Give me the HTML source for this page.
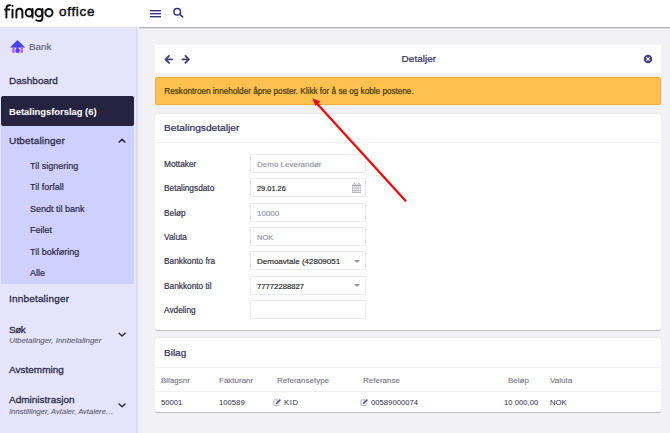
<!DOCTYPE html>
<html><head><meta charset="utf-8">
<style>
*{margin:0;padding:0;box-sizing:border-box}
html,body{width:670px;height:433px;overflow:hidden;background:#f1f1f6;font-family:"Liberation Sans",sans-serif;color:#27263f}
.abs{position:absolute}
.sh{transform:scaleY(.87);transform-origin:0 0.85em}
.sh9{transform:scaleY(.91);transform-origin:0 0.85em}
.t{position:absolute;white-space:nowrap;line-height:1}
#hdr{position:absolute;left:0;top:0;width:670px;height:27px;background:#fff}
#hdrline{position:absolute;left:137px;top:27px;width:533px;height:2px;background:linear-gradient(#b6b6b8 0,#b6b6b8 1px,#dedee2 1px)}
#side{position:absolute;left:0;top:27px;width:137px;height:406px;background:#e4e5fc}
#sideshadow{position:absolute;left:136px;top:27px;width:3px;height:406px;background:linear-gradient(90deg,#d8d9f0 0,#d8d9f0 1px,#e2e2ea 1px,#e2e2ea 2px,#ececf2 2px)}
.sb{font-size:10px;color:#2a2944;-webkit-text-stroke:0.28px #2a2944}
.sub{font-size:9px;color:#2a2944;-webkit-text-stroke:0.2px #2a2944}
.card{position:absolute;background:#fff;border-radius:2px;box-shadow:0 1px 0 rgba(0,0,0,.2),0 -1px 0 rgba(0,0,0,.03)}
.lbl{font-size:8.3px;color:#34334a;-webkit-text-stroke:0.2px #34334a}
.inp{position:absolute;left:250px;width:116px;height:19px;border:1px solid #eaeaee;border-radius:2px;background:#fff}
.val{font-size:8px;color:#222;}
.ph{font-size:8px;color:#8c8b9b;-webkit-text-stroke:0.1px #8c8b9b}
.th{font-size:8px;color:#73727f;-webkit-text-stroke:0.1px #73727f}
.td{font-size:7.7px;color:#2e2d45}
</style></head><body>
<div id="hdr"></div>
<div id="side"></div>
<div id="hdrline"></div>
<div id="sideshadow"></div>

<!-- logo -->
<svg class="abs" style="left:0;top:0" width="56" height="26" viewBox="0 0 56 26">
 <g fill="none" stroke="#111" stroke-width="1.95" stroke-linecap="round">
  <path d="M6.4 17.4 V8.4 Q6.4 5.2 9.4 5.2 H10.2"/>
  <path d="M5 9.4 H9.4"/>
  <path d="M12.5 9.6 V17.4"/>
  <path d="M16.4 17.4 V11.8 A3 3 0 0 1 22.4 11.8 V17.4"/>
  <ellipse cx="29.1" cy="12.65" rx="3.4" ry="3.75"/>
  <path d="M32.5 8.9 V17.4"/>
  <ellipse cx="39" cy="12.65" rx="3.4" ry="3.75"/>
  <path d="M42.4 8.9 V18 Q42.4 21 39.3 21 Q37.3 21 36.3 20.1"/>
  <ellipse cx="48.95" cy="12.65" rx="3.58" ry="3.75"/>
 </g>
 <circle cx="12.5" cy="5.8" r="1.1" fill="#111"/>
</svg>
<div class="t" style="left:59px;top:5.3px;font-size:13.5px;font-weight:400;letter-spacing:0.7px;color:#111;-webkit-text-stroke:0.45px #111">office</div>

<!-- hamburger & search -->
<svg class="abs" style="left:149px;top:7.7px" width="14" height="12" viewBox="0 0 14 12">
 <rect x="1" y="2" width="11" height="1.4" fill="#36367a"/>
 <rect x="1" y="5" width="11" height="1.4" fill="#36367a"/>
 <rect x="1" y="8" width="11" height="1.4" fill="#36367a"/>
</svg>
<svg class="abs" style="left:172px;top:6px" width="14" height="13" viewBox="0 0 14 13">
 <circle cx="5.2" cy="5.7" r="3.3" fill="none" stroke="#36367a" stroke-width="1.5"/>
 <line x1="7.6" y1="8.1" x2="11.1" y2="11.4" stroke="#36367a" stroke-width="1.6"/>
</svg>

<!-- sidebar -->
<svg class="abs" style="left:9px;top:39px" width="18" height="15" viewBox="0 0 18 15">
 <rect x="3.2" y="8.5" width="2.3" height="5.4" fill="#c25cf0"/>
 <rect x="11.5" y="8.5" width="2.4" height="5.4" fill="#c25cf0"/>
 <polygon points="8.5,0.9 16.1,8.5 0.9,8.5" fill="#4c40f4"/>
 <rect x="7.4" y="8" width="2.2" height="2.5" fill="#4c40f4"/>
 <circle cx="8.5" cy="11.7" r="2.3" fill="#4c40f4"/>
</svg>
<div class="t sh9" style="left:29px;top:41.5px;font-size:9.8px;color:#646378;-webkit-text-stroke:0.2px #646378">Bank</div>

<div class="t sb sh9" style="left:9px;top:75.8px">Dashboard</div>
<div class="abs" style="left:1px;top:96px;width:133px;height:30px;background:#25233f;border-radius:2px"></div>
<div class="t sb sh9" style="left:9px;top:107px;color:#fff;-webkit-text-stroke:0.05px #fff;font-size:9.4px;font-weight:700">Betalingsforslag (6)</div>
<div class="abs" style="left:1px;top:126px;width:133px;height:158px;background:#ced0fd"></div>
<div class="t sb sh9" style="left:9px;top:136px;letter-spacing:0.17px">Utbetalinger</div>
<div class="t sub" style="left:30px;top:162px">Til signering</div>
<div class="t sub" style="left:30px;top:183px">Til forfall</div>
<div class="t sub" style="left:30px;top:205px">Sendt til bank</div>
<div class="t sub" style="left:30px;top:226px">Feilet</div>
<div class="t sub" style="left:30px;top:248px">Til bokføring</div>
<div class="t sub" style="left:30px;top:269px">Alle</div>

<div class="t sb sh9" style="left:9px;top:294.3px;letter-spacing:0.18px">Innbetalinger</div>
<div class="t sb sh9" style="left:9px;top:324.5px;letter-spacing:-0.5px">Søk</div>
<div class="t" style="left:9.2px;top:337.2px;font-size:7.9px;font-style:italic;color:#5d5c72;-webkit-text-stroke:0.1px #5d5c72">Utbetalinger, Innbetalinger</div>
<div class="t sb sh9" style="left:9px;top:365.2px">Avstemming</div>
<div class="t sb sh9" style="left:9px;top:395.3px">Administrasjon</div>
<div class="t" style="left:9.2px;top:407.9px;font-size:7.6px;font-style:italic;color:#5d5c72;-webkit-text-stroke:0.1px #5d5c72">Innstillinger, Avtaler, Avtalere…</div>

<svg class="abs" style="left:0;top:0" width="137" height="433" viewBox="0 0 137 433">
 <g fill="none" stroke="#27263f" stroke-width="1.45" stroke-linecap="round" stroke-linejoin="round">
  <path d="M119.1 142.1 L122.05 139.3 L125 142.1"/>
  <path d="M119.1 333.2 L122.1 336 L125.1 333.2"/>
  <path d="M119.1 404 L122.1 406.8 L125.1 404"/>
 </g>
</svg>
<!-- top card -->
<div class="card" style="left:155px;top:45px;width:506px;height:28px;box-shadow:none;border-radius:0"></div>
<svg class="abs" style="left:0;top:0" width="670" height="80" viewBox="0 0 670 80">
 <path d="M169 55.9 L165.5 59.4 L169 62.9 M165.8 59.4 H172" fill="none" stroke="#45436a" stroke-width="1.9" stroke-linecap="round" stroke-linejoin="round"/>
 <path d="M185.4 55.9 L188.9 59.4 L185.4 62.9 M188.6 59.4 H182.4" fill="none" stroke="#45436a" stroke-width="1.9" stroke-linecap="round" stroke-linejoin="round"/>
 <circle cx="648" cy="59" r="4.3" fill="#45437c"/>
 <path d="M646.3 57.3 L649.7 60.7 M649.7 57.3 L646.3 60.7" stroke="#fff" stroke-width="1.1"/>
</svg>
<div class="t sh" style="left:401.6px;top:54px;font-size:10px;color:#2e2d5a;-webkit-text-stroke:0.22px #2e2d5a">Detaljer</div>


<!-- alert -->
<div class="abs" style="left:155px;top:77px;width:506px;height:28px;background:#fec04e;border:1px solid #f0ae3a;border-radius:2px"></div>
<div class="t" style="left:164.3px;top:87.7px;font-size:8.17px;color:#453712;-webkit-text-stroke:0.2px #453712">Reskontroen inneholder åpne poster. Klikk for å se og koble postene.</div>

<!-- details card -->
<div class="card" style="left:155px;top:114px;width:506px;height:216px"></div>
<div class="t sh" style="left:164px;top:122.8px;font-size:10.2px;color:#2e2d5a;-webkit-text-stroke:0.22px #2e2d5a">Betalingsdetaljer</div>
<div class="abs" style="left:155px;top:142px;width:506px;height:1px;background:#f0f0f3"></div>

<div class="t lbl" style="left:164px;top:159.5px">Mottaker</div>
<div class="t lbl" style="left:164px;top:183.5px">Betalingsdato</div>
<div class="t lbl" style="left:164px;top:208.5px">Beløp</div>
<div class="t lbl" style="left:164px;top:232.5px">Valuta</div>
<div class="t lbl" style="left:164px;top:256.5px">Bankkonto fra</div>
<div class="t lbl" style="left:164px;top:281.5px">Bankkonto til</div>
<div class="t lbl" style="left:164px;top:305.5px">Avdeling</div>

<div class="inp" style="top:154px"></div>
<div class="t ph" style="left:257px;top:161px">Demo Leverandør</div>
<div class="inp" style="top:178px"></div>
<div class="t val" style="left:257px;top:185px;font-size:7.4px;-webkit-text-stroke:0.15px #222">29.01.26</div>
<svg class="abs" style="left:0;top:0" width="670" height="200" viewBox="0 0 670 200">
 <rect x="352" y="185" width="9" height="8" rx="0.6" fill="#a6a6ae"/><rect x="352.65" y="186.10" width="1.65" height="1.65" fill="#fff"/><rect x="352.65" y="188.35" width="1.65" height="1.65" fill="#fff"/><rect x="352.65" y="190.60" width="1.65" height="1.65" fill="#fff"/><rect x="354.75" y="186.10" width="1.65" height="1.65" fill="#fff"/><rect x="354.75" y="188.35" width="1.65" height="1.65" fill="#fff"/><rect x="354.75" y="190.60" width="1.65" height="1.65" fill="#fff"/><rect x="356.85" y="186.10" width="1.65" height="1.65" fill="#fff"/><rect x="356.85" y="188.35" width="1.65" height="1.65" fill="#fff"/><rect x="356.85" y="190.60" width="1.65" height="1.65" fill="#fff"/><rect x="358.95" y="186.10" width="1.65" height="1.65" fill="#fff"/><rect x="358.95" y="188.35" width="1.65" height="1.65" fill="#fff"/><rect x="358.95" y="190.60" width="1.65" height="1.65" fill="#fff"/>
 
 <path d="M352.3 185.5 L354.2 183.2 L356.1 185.5 M356.9 185.5 L358.8 183.2 L360.7 185.5" fill="none" stroke="#a6a6ae" stroke-width="0.9"/>
</svg>
<div class="inp" style="top:203px"></div>
<div class="t ph" style="left:257px;top:210px">10000</div>
<div class="inp" style="top:227px"></div>
<div class="t ph" style="left:257px;top:234px;font-size:7.5px">NOK</div>
<div class="inp" style="top:251px"></div>
<div class="t val" style="left:257px;top:258px;-webkit-text-stroke:0.15px #222">Demoavtale (42809051</div>
<svg class="abs" style="left:353px;top:259px" width="8" height="5" viewBox="0 0 8 5"><polygon points="1,1 7,1 4,4" fill="#9a9aa2"/></svg>
<div class="inp" style="top:276px"></div>
<div class="t val" style="left:257px;top:283px;font-size:7.7px;-webkit-text-stroke:0.15px #222">77772288827</div>
<svg class="abs" style="left:353px;top:283px" width="8" height="5" viewBox="0 0 8 5"><polygon points="1,1 7,1 4,4" fill="#9a9aa2"/></svg>
<div class="inp" style="top:300px"></div>

<!-- bilag card -->
<div class="card" style="left:155px;top:338px;width:506px;height:74px"></div>
<div class="t sh" style="left:164px;top:347.7px;font-size:10px;color:#2e2d5a;-webkit-text-stroke:0.22px #2e2d5a">Bilag</div>
<div class="abs" style="left:155px;top:367px;width:506px;height:1px;background:#f0f0f3"></div>
<div class="abs" style="left:155px;top:391px;width:506px;height:1px;background:#f0f0f3"></div>
<div class="t th" style="left:161px;top:376.8px">Bilagsnr</div>
<div class="t th" style="left:219px;top:376.8px">Fakturanr</div>
<div class="t th" style="left:277px;top:376.8px">Referansetype</div>
<div class="t th" style="left:363px;top:376.8px">Referanse</div>
<div class="t th" style="left:508px;top:376.8px">Beløp</div>
<div class="t th" style="left:550px;top:376.8px">Valuta</div>

<div class="t td" style="left:161px;top:399px">50001</div>
<div class="t td" style="left:219px;top:399px">100589</div>
<svg class="abs" style="left:273px;top:399px" width="8" height="7" viewBox="0 0 8 7">
 <path d="M5.2 0.9 H1.6 Q0.9 0.9 0.9 1.6 V5.8 Q0.9 6.5 1.6 6.5 H5.4 Q6.1 6.5 6.1 5.8 V4.2" fill="none" stroke="#a9a8cf" stroke-width="1"/>
 <path d="M3.2 4.6 L7.4 0.6" stroke="#4a48a0" stroke-width="1.5"/>
</svg>
<div class="t td" style="left:284px;top:399px;font-size:7.6px;letter-spacing:0.7px">KID</div>
<svg class="abs" style="left:360px;top:399px" width="8" height="7" viewBox="0 0 8 7">
 <path d="M5.2 0.9 H1.6 Q0.9 0.9 0.9 1.6 V5.8 Q0.9 6.5 1.6 6.5 H5.4 Q6.1 6.5 6.1 5.8 V4.2" fill="none" stroke="#a9a8cf" stroke-width="1"/>
 <path d="M3.2 4.6 L7.4 0.6" stroke="#4a48a0" stroke-width="1.5"/>
</svg>
<div class="t td" style="left:371px;top:399px">00589000074</div>
<div class="t td" style="left:504px;top:399px">10 000,00</div>
<div class="t td" style="left:550px;top:399px">NOK</div>

<!-- red arrow -->
<svg class="abs" style="left:0;top:0" width="670" height="433" viewBox="0 0 670 433">
 <line x1="405.5" y1="200.8" x2="316" y2="102.5" stroke="#ff0000" stroke-width="2.2" stroke-linecap="round"/>
 <polygon points="312.5,98.5 320.5,101.5 315.5,106" fill="#ff0000"/>
</svg>
</body></html>
